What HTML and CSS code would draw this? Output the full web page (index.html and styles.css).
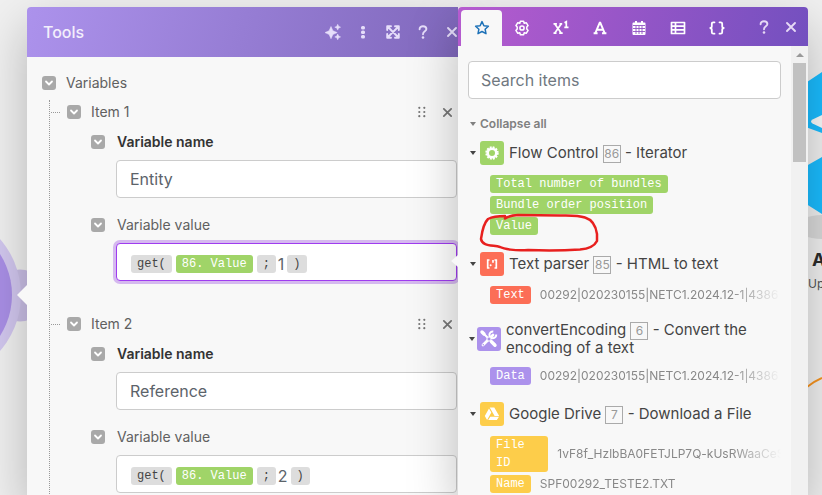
FILE: index.html
```html
<!DOCTYPE html>
<html lang="en">
<head>
<meta charset="utf-8">
<title>Tools</title>
<link rel="stylesheet" href="styles.css">
</head>
<body>
<svg width="0" height="0" class="defs" aria-hidden="true">
  <symbol id="i-chevron" viewBox="0 0 14 14"><path d="M4 5.500l3 3 3-3" fill="none" stroke="#fff" stroke-width="1.800" stroke-linecap="round" stroke-linejoin="round"/></symbol>
  <symbol id="i-close" viewBox="0 0 12 12"><path d="M2 2l8 8M10 2l-8 8" fill="none" stroke="currentColor" stroke-width="1.900" stroke-linecap="round"/></symbol>
  <symbol id="i-grip" viewBox="0 0 8 12"><g fill="currentColor"><circle cx="1.300" cy="1.800" r="1.100"/><circle cx="6.300" cy="1.800" r="1.100"/><circle cx="1.300" cy="6" r="1.100"/><circle cx="6.300" cy="6" r="1.100"/><circle cx="1.300" cy="10.200" r="1.100"/><circle cx="6.300" cy="10.200" r="1.100"/></g></symbol>
  <symbol id="i-help" viewBox="0 0 12 16"><path d="M2.600 5.200C2.600 3.200 4 2.200 6 2.200s3.400 1 3.400 2.900C9.400 7.400 6 7.300 6 10.200" fill="none" stroke="currentColor" stroke-width="1.900" stroke-linecap="round"/><circle cx="6" cy="13.500" r="1.300" fill="currentColor"/></symbol>
</svg>

<svg class="canvas canvas-left" viewBox="0 0 60 495" width="60" height="495" aria-hidden="true">
  <circle cx="20" cy="295.500" r="26" fill="#cabfe6"/>
  <circle cx="-64" cy="295" r="85" fill="#d2c7ef"/>
  <circle cx="-64" cy="295" r="76" fill="#a98fe6"/>
</svg>
<div class="canvas canvas-right">
  <svg viewBox="0 0 22 495" width="22" height="495" aria-hidden="true">
    <ellipse cx="22" cy="227" rx="26" ry="12" fill="#dadada"/>
    <path d="M7 82L22 72V133L7 127.500zM7 165.500L22 157V214L7 204.500z" fill="#1abcff"/>
    <path d="M22 115l-9.500 4.500q-3 2 0 4L22 128z" fill="#fafafa"/>
    <path d="M7 387q7-5.500 15-9" fill="none" stroke="#f7931e" stroke-width="2"/>
  </svg>
  <div class="module-name"><strong>A</strong><span>Up</span></div>
</div>

<main class="workspace">
  <section class="tools">
    <header class="tools-head">
      <h1>Tools</h1>
      <div class="tools-actions">
        <button aria-label="Assistant"><svg width="16" height="16" viewBox="0 0 16 16"><path d="M6 2.500L7.900 6.700l4.300 1.900-4.300 1.900L6 14.700l-1.900-4.200L0 8.600l4.100-1.900zM12.700.3l.9 2 2 .9-2 .9-.9 2-.9-2-2-.9 2-.9zM12.700 10l.9 2 2 .9-2 .9-.9 2-.9-2-2-.9 2-.9z" fill="currentColor" stroke="currentColor" stroke-width=".5" stroke-linejoin="round"/></svg></button>
        <button aria-label="More"><svg width="16" height="16" viewBox="0 0 16 16"><g fill="currentColor"><rect x="6" y="2" width="4" height="3.400" rx="1.500"/><rect x="6" y="6.500" width="4" height="3.400" rx="1.500"/><rect x="6" y="11" width="4" height="3.400" rx="1.500"/></g></svg></button>
        <button aria-label="Expand"><svg width="16" height="16" viewBox="0 0 16 16"><path d="M6 2.200H2.200V6M10 2.200h3.800V6M6 13.800H2.200V10M10 13.800h3.800V10M3 3l10 10M13 3L3 13" fill="none" stroke="currentColor" stroke-width="1.900" stroke-linecap="round" stroke-linejoin="round"/></svg></button>
        <button aria-label="Help"><svg width="12" height="16"><use href="#i-help"/></svg></button>
        <button aria-label="Close"><svg width="12" height="12"><use href="#i-close"/></svg></button>
      </div>
    </header>
    <div class="tools-body">
      <div class="row"><button class="toggle" aria-label="Toggle variables"><svg width="14" height="14"><use href="#i-chevron"/></svg></button><span>Variables</span></div>
      <ul class="tree">
        <li class="item">
          <div class="row"><button class="toggle" aria-label="Toggle item 1"><svg width="14" height="14"><use href="#i-chevron"/></svg></button><span>Item 1</span>
            <div class="item-actions"><button aria-label="Move"><svg width="8" height="12"><use href="#i-grip"/></svg></button><button aria-label="Remove"><svg width="11" height="11"><use href="#i-close"/></svg></button></div></div>
          <div class="field">
            <div class="field-label"><button class="toggle" aria-label="Toggle field"><svg width="14" height="14"><use href="#i-chevron"/></svg></button><label class="required" for="name1">Variable name</label></div>
            <input id="name1" class="box" type="text" value="Entity">
          </div>
          <div class="field">
            <div class="field-label"><button class="toggle" aria-label="Toggle field"><svg width="14" height="14"><use href="#i-chevron"/></svg></button><span id="value1">Variable value</span></div>
            <div class="box formula active" role="textbox" contenteditable="true" spellcheck="false" aria-labelledby="value1"><span class="chip plain">get(</span><span class="chip green">86. Value</span><span class="chip plain">;</span><span class="literal">1</span><span class="chip plain">)</span></div>
          </div>
        </li>
        <li class="item">
          <div class="row"><button class="toggle" aria-label="Toggle item 2"><svg width="14" height="14"><use href="#i-chevron"/></svg></button><span>Item 2</span>
            <div class="item-actions"><button aria-label="Move"><svg width="8" height="12"><use href="#i-grip"/></svg></button><button aria-label="Remove"><svg width="11" height="11"><use href="#i-close"/></svg></button></div></div>
          <div class="field">
            <div class="field-label"><button class="toggle" aria-label="Toggle field"><svg width="14" height="14"><use href="#i-chevron"/></svg></button><label class="required" for="name2">Variable name</label></div>
            <input id="name2" class="box" type="text" value="Reference">
          </div>
          <div class="field">
            <div class="field-label"><button class="toggle" aria-label="Toggle field"><svg width="14" height="14"><use href="#i-chevron"/></svg></button><span id="value2">Variable value</span></div>
            <div class="box formula" role="textbox" contenteditable="true" spellcheck="false" aria-labelledby="value2"><span class="chip plain">get(</span><span class="chip green">86. Value</span><span class="chip plain">;</span><span class="literal">2</span><span class="chip plain">)</span></div>
          </div>
        </li>
      </ul>
    </div>
  </section>

  <aside class="items">
    <header class="items-head">
      <nav class="tabs">
        <button class="tab selected" aria-label="Favourites"><svg width="16" height="16" viewBox="0 0 16 16"><path d="M8 1.600l1.900 4.100 4.500.5-3.300 3 .9 4.500L8 11.500l-4 2.200.9-4.500-3.300-3 4.500-.5z" fill="none" stroke="#1e72b8" stroke-width="1.500" stroke-linejoin="round"/></svg></button>
        <button class="tab" aria-label="General"><svg width="16" height="16" viewBox="0 0 16 16"><path d="M6.400 1.200h3.200l.6 2 2-.5 1.900 2.900L12.800 7v2l1.300 1.400-1.900 2.900-2-.5-.6 2H6.400l-.6-2-2 .5-1.900-2.900L3.200 9V7L1.900 5.600l1.900-2.900 2 .5z" fill="none" stroke="currentColor" stroke-width="1.500" stroke-linejoin="round"/><circle cx="8" cy="8" r="2.100" fill="none" stroke="currentColor" stroke-width="1.500"/></svg></button>
        <button class="tab" aria-label="Math"><svg width="16" height="16" viewBox="0 0 16 16"><path d="M1.800 4l6.400 9M8.200 4l-6.400 9M.5 3.800h3.400M6.500 3.800H9.200M.5 13.200h3M6.200 13.200h3.500M11.500 2.700l1.800-1v5.500M11.300 7.300h4.200" fill="none" stroke="currentColor" stroke-width="1.700"/></svg></button>
        <button class="tab" aria-label="Text"><svg width="16" height="16" viewBox="0 0 16 16"><path d="M3.200 13.300L7.700 2.800h.6l4.500 10.500M5 9.800h6M1.600 13.300h4M10 13.300h4.400" fill="none" stroke="currentColor" stroke-width="1.900"/></svg></button>
        <button class="tab" aria-label="Date"><svg width="16" height="16" viewBox="0 0 16 16"><path d="M4 1h2v1.500h4V1h2v1.500h1.500a1 1 0 011 1V14a1 1 0 01-1 1h-11a1 1 0 01-1-1V3.500a1 1 0 011-1H4z" fill="currentColor"/><path d="M2 5.500h12M2 8.500h12M2 11.500h12M5 6v8M8 6v8M11 6v8" stroke="#9153c3" stroke-width=".9"/></svg></button>
        <button class="tab" aria-label="Array"><svg width="16" height="16" viewBox="0 0 16 16"><path d="M1.500 2.500h13v11h-13zM2 6.200h12M2 9.800h12M5.500 3v10" fill="none" stroke="currentColor" stroke-width="1.700" stroke-linejoin="round"/></svg></button>
        <button class="tab" aria-label="Custom"><svg width="18" height="16" viewBox="0 0 18 16"><path d="M6.500 2.300H5.300q-1.500 0-1.500 1.500v2.400Q3.800 8 1.600 8q2.200 0 2.200 1.800v2.400q0 1.500 1.500 1.500h1.200M11.500 2.300h1.200q1.500 0 1.500 1.500v2.400q0 1.800 2.200 1.800-2.200 0-2.200 1.800v2.400q0 1.500-1.500 1.500h-1.200" fill="none" stroke="currentColor" stroke-width="1.800" stroke-linecap="round"/></svg></button>
      </nav>
      <div class="items-actions">
        <button aria-label="Help"><svg width="12" height="16"><use href="#i-help"/></svg></button>
        <button aria-label="Close"><svg width="12" height="12"><use href="#i-close"/></svg></button>
      </div>
    </header>
    <div class="items-main">
      <div class="items-list">
        <input class="box search" type="text" placeholder="Search items" aria-label="Search items">
        <button class="collapse"><i class="caret"></i>Collapse all</button>
        <section class="group">
          <h2><i class="caret"></i><svg class="app green" width="24" height="24" viewBox="0 0 24 24"><circle cx="12" cy="12" r="4.300" fill="none" stroke="#fff" stroke-width="2.600"/><circle cx="12" cy="12" r="5.800" fill="none" stroke="#fff" stroke-width="1.800" stroke-dasharray="1.900 1.140"/></svg><span>Flow Control <small>86</small> - Iterator</span></h2>
          <ul>
            <li><span class="chip green">Total number of bundles</span></li>
            <li><span class="chip green">Bundle order position</span></li>
            <li><span class="chip green">Value</span></li>
          </ul>
          <svg class="marker" width="124" height="44" viewBox="478 210 124 44" aria-hidden="true"><path d="M505 218.500Q509 215.500 518 215L560 215.500Q578 215 585 217.500C593 220 596 227 597 234V241C594 247 586 249 580 249.500Q555 251 528 250C515 251 504 249 500 247C492 245 482 246 481 239C482 232 483 224 488 219Q494 216 505 216" fill="none" stroke="#e8201f" stroke-width="2.500" stroke-linecap="round" stroke-linejoin="round"/></svg>
        </section>
        <section class="group">
          <h2><i class="caret"></i><svg class="app red" width="24" height="24" viewBox="0 0 24 24"><path d="M9.500 8H7.700v8h1.800M14.500 8h1.800v8h-1.800M13 8v2.800" fill="none" stroke="#fff" stroke-width="1.700"/><circle cx="10.600" cy="13.300" r="1" fill="#fff"/></svg><span>Text parser <small>85</small> - HTML to text</span></h2>
          <ul><li><span class="chip red">Text</span><span class="value">00292|020230155|NETC1.2024.12-1|4386</span></li></ul>
        </section>
        <section class="group">
          <h2 class="long"><i class="caret"></i><svg class="app purple" width="24" height="24" viewBox="0 0 24 24"><path d="M5.500 5.500l6 6M13 13l5 5" stroke="#fff" stroke-width="2" stroke-linecap="round"/><path d="M5 5l2 2M14.500 14.800l3.500 3.500" stroke="#fff" stroke-width="3.400" stroke-linecap="round"/><path d="M6 18L16 8" stroke="#fff" stroke-width="2.800" stroke-linecap="round"/><path d="M19.200 7.500a3.400 3.400 0 11-2.900-3" fill="none" stroke="#fff" stroke-width="2"/><circle cx="12" cy="12" r="2.100" fill="#ac92ec" stroke="#fff"/><circle cx="6.300" cy="17.700" r=".8" fill="#ac92ec"/></svg><span>convertEncoding <small>6</small> - Convert the encoding of a text</span></h2>
          <ul><li><span class="chip purple">Data</span><span class="value">00292|020230155|NETC1.2024.12-1|4386</span></li></ul>
        </section>
        <section class="group">
          <h2><i class="caret"></i><svg class="app yellow" width="24" height="24" viewBox="0 0 24 24"><path d="M9.700 5.500h4.600l4.900 8.500h-4.600zM9 6.600l2.300 4L7.100 18l-2.300-4zM10.300 14.800H19L16.800 18H8.200z" fill="#fff"/></svg><span>Google Drive <small>7</small> - Download a File</span></h2>
          <ul>
            <li><span class="chip yellow">File ID</span><span class="value">1vF8f_HzlbBA0FETJLP7Q-kUsRWaaCeS</span></li>
            <li><span class="chip yellow">Name</span><span class="value">SPF00292_TESTE2.TXT</span></li>
          </ul>
        </section>
      </div>
      <div class="scrollbar" aria-hidden="true"><i class="up"></i><i class="thumb"></i></div>
    </div>
  </aside>
</main>
</body>
</html>
```
FILE: styles.css
```css
* { box-sizing: border-box; }
body {
  margin: 0;
  height: 100vh;
  overflow: hidden;
  position: relative;
  background: #f0f0f0;
  color: #606060;
  font: 14px/18px Inter, "Liberation Sans", sans-serif;
}
ul { list-style: none; margin: 0; padding: 0; }
button {
  display: flex;
  align-items: center;
  justify-content: center;
  padding: 0;
  border: 0;
  background: none;
  color: inherit;
  font: inherit;
}
svg { flex: none; display: block; }
.defs { position: absolute; }

.canvas { position: absolute; top: 0; }
.canvas-left { left: 0; }
.canvas-right { right: 0; width: 22px; overflow: hidden; }
.module-name { position: absolute; top: 250px; left: 8px; color: #2c2c2c; }
.module-name strong { display: block; padding-left: 4px; font-size: 18px; line-height: 20px; font-weight: 700; }
.module-name span { display: block; margin-top: 4px; font-size: 12px; line-height: 20px; color: #555; }

.workspace {
  position: relative;
  display: flex;
  height: 100vh;
  padding: 7px 14px 0 27px;
}

.tools {
  position: relative;
  flex: 431 1 0;
  min-width: 0;
  border-radius: 4px 0 0 0;
  background: #f8f8f8;
  box-shadow: 0 20px 50px rgba(0, 0, 0, .25);
}
.tools::before, .items::before {
  content: "";
  position: absolute;
  border: solid transparent;
  border-right-color: #f8f8f8;
}
.tools::before { left: -10px; top: 278px; border-width: 10px 10px 10px 0; }
.tools-head {
  display: flex;
  align-items: center;
  justify-content: space-between;
  height: 50px;
  padding-left: 16px;
  border-radius: 4px 0 0 0;
  background: linear-gradient(105deg, #ac92ec, #8068bc);
  color: #f3effc;
}
h1 { margin: 0; font-size: 16px; line-height: 20px; font-weight: 500; }
.tools-actions { display: flex; color: #e6defa; }
.tools-actions button { width: 30px; height: 30px; }
.tools-actions button:last-child { width: 20px; padding-left: 8px; }
.tools-body { height: calc(100vh - 57px); padding: 14px 1px 0 15px; overflow: hidden; }
.row { display: flex; align-items: center; gap: 10px; height: 24px; }
.toggle { flex: none; width: 14px; height: 14px; border-radius: 3px; background: #a9a9a9; }
.tree { margin: 5px 0 0 7px; border-left: 1px dotted #999; }
.item { position: relative; padding: 0 0 31px 17px; }
.item::before { content: ""; position: absolute; left: 1px; top: 12px; width: 9px; border-top: 1px dotted #999; }
.item-actions { display: flex; gap: 16px; margin-left: auto; padding-right: 4px; color: #777; }
.field { padding-left: 49px; }
.field + .field { padding-top: 9px; }
.field-label { display: flex; align-items: center; gap: 12px; height: 36px; margin-left: -25px; }
.required { font-weight: 600; color: #333; }
.box {
  display: block;
  width: 100%;
  height: 38px;
  padding: 0 13px;
  border: 1px solid #ccc;
  border-radius: 4px;
  background: #fff;
  color: #5c636a;
  font: 16px/20px Inter, "Liberation Sans", sans-serif;
  outline: 0;
}
.formula { display: flex; align-items: center; gap: 4px; padding: 4px 14px 0; }
.literal { margin: 0 -1px 0 -2px; }
.active { border-color: #9f3cf0; box-shadow: 0 0 0 3px #d5b9ef; }

.chip {
  flex: none;
  padding: 0 6px;
  border-radius: 3px;
  color: #fff;
  font: 12px/18px "Liberation Mono", monospace;
}
.plain { background: #ddd; color: #444; }
.green { background: #a0d468; }
.red { background: #fc6e56; }
.purple { background: #ac92ec; }
.yellow { background: #fdcd4a; }

.items {
  position: relative;
  display: flex;
  flex-direction: column;
  flex: 350 1 0;
  min-width: 0;
  border-radius: 4px 4px 0 0;
  background: #f8f8f8;
  box-shadow: 0 20px 50px rgba(0, 0, 0, .25);
}
.items::before { left: -7px; top: 248px; border-width: 6px 7px 6px 0; }
.items-head {
  display: flex;
  justify-content: space-between;
  height: 39px;
  padding: 3px 4px 0 3px;
  border-radius: 4px 4px 0 0;
  background: linear-gradient(105deg, #b65bcf, #7350bf);
  color: #fff;
}
.tabs, .items-actions { display: flex; }
.tab { width: 39px; }
.selected { width: 41px; border-radius: 4px 4px 0 0; background: #f8f8f8; }
.items-actions { padding-bottom: 2px; color: #e6d9f5; }
.items-actions button { width: 27px; }
.items-main { display: flex; flex: 1; min-height: 0; }
.items-list { flex: 1; min-width: 0; padding: 15px 10px 0; overflow: hidden; }
.search { padding: 0 12px; }
.search::placeholder { color: #70787f; opacity: 1; }
.caret { flex: none; width: 6px; border: solid transparent; border-width: 4px 3px 0; border-top-color: currentColor; }
.collapse { gap: 4px; margin: 17px 0 9px 2px; height: 16px; font-size: 12px; font-weight: 600; color: #808080; }
.group { position: relative; margin-bottom: 17px; }
h2 {
  display: flex;
  align-items: center;
  min-height: 24px;
  margin: 0 0 10px 2px;
  font-size: 15px;
  line-height: 18px;
  font-weight: 400;
  color: #444;
}
.app { margin: 0 5px 0 4px; border-radius: 3px; }
.long { margin-left: 1px; }
.long .app { margin-left: 2px; }
small {
  display: inline-block;
  min-width: 18px;
  margin: -2px 0;
  border: 1px solid #aaa;
  font-size: 12px;
  line-height: 16px;
  text-align: center;
  color: #999;
}
.group ul { display: grid; gap: 3px; padding-left: 22px; }
.group li { display: flex; align-items: center; gap: 9px; min-width: 0; }
.chip:not(:last-child) { max-width: 20%; }
.formula .chip { max-width: none; }
.value {
  flex: 1;
  min-width: 0;
  overflow: hidden;
  white-space: nowrap;
  font-size: 12px;
  color: #888;
  mask-image: linear-gradient(to left, transparent, #000 50px);
}
.marker { position: absolute; left: 10px; top: 69px; }
.scrollbar {
  display: flex;
  flex-direction: column;
  align-items: center;
  width: 17px;
  background: #f1f1f1;
}
.up { margin: 7px 0 6px; border: solid transparent; border-width: 0 4px 4px; border-bottom-color: #999; }
.thumb { width: 13px; height: 22%; background: #c1c1c1; }
```
